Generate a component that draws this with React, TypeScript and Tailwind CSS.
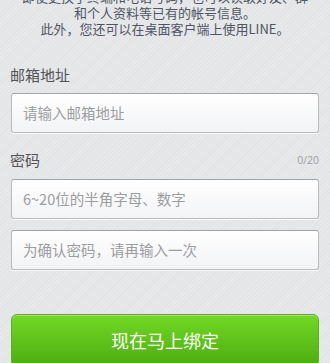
import React from 'react';

const fieldClass =
  'h-10 w-full rounded-[3px] border border-[#b9babc] border-t-[#a2a3a5] bg-gradient-to-b from-white to-[#f2f3f5] px-[11px] flex items-center text-[14.5px] text-[#9c9d9f] shadow-[0_1px_0_rgba(255,255,255,0.8)]';

export default function App() {
  return (
    <div
      className="w-[330px] h-[363px] overflow-hidden bg-[#e5e6e8] bg-[repeating-linear-gradient(135deg,#e2e3e5_0px,#e2e3e5_1px,#e7e8ea_1px,#e7e8ea_3px)]"
      style={{ fontFamily: '"Noto Sans CJK SC", "Liberation Sans", sans-serif' }}
    >
      <div className="px-[11px]">
        {/* intro text, first line runs off the top */}
        <div className="-mt-[11px] text-center text-[13px] leading-[16px] text-[#4f5563]">
          <p>即使更换了终端和电话号码，也可以读取好友、群</p>
          <p>和个人资料等已有的帐号信息。</p>
          <p>此外，您还可以在桌面客户端上使用LINE。</p>
        </div>

        <div className="mt-[27px] -ml-px text-[15px] leading-[22px] text-[#525355]">邮箱地址</div>
        <div className="mt-[7px]">
          <div className={fieldClass}>请输入邮箱地址</div>
        </div>

        <div className="mt-[16px] flex items-center justify-between">
          <span className="-ml-px text-[15px] leading-[22px] text-[#525355]">密码</span>
          <span className="text-[10.5px] leading-[22px] text-[#9c9d9f]" style={{ fontFamily: '"Open Sans", "Liberation Sans", sans-serif' }}>
            0/20
          </span>
        </div>
        <div className="mt-[8px]">
          <div className={fieldClass}>6~20位的半角字母、数字</div>
        </div>
        <div className="mt-[11px]">
          <div className={fieldClass}>为确认密码，请再输入一次</div>
        </div>

        <button className="mt-[44px] h-[53px] w-full rounded-[6px] border border-[#56b414] bg-gradient-to-b from-[#72d923] to-[#4cad10] text-[18px] text-white shadow-[inset_0_1px_0_rgba(255,255,255,0.35)]">
          现在马上绑定
        </button>
      </div>
    </div>
  );
}
